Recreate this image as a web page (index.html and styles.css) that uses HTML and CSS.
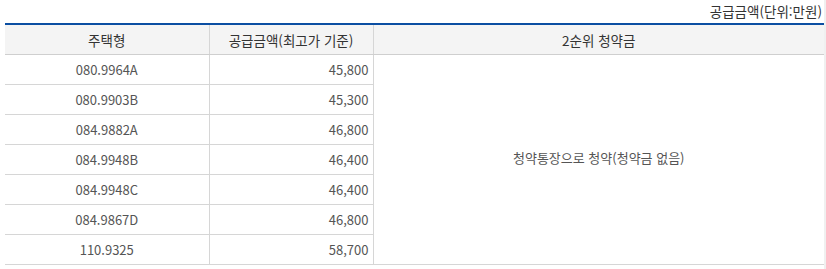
FILE: index.html
```html
<!DOCTYPE html>
<html lang="ko">
<head>
<meta charset="utf-8">
<link rel="stylesheet" href="styles.css">
</head>
<body>
<div class="page">
  <div class="content">
    <p class="unit">공급금액(단위:만원)</p>
    <table class="price">
      <colgroup>
        <col class="c1"><col class="c2"><col class="c3">
      </colgroup>
      <thead>
        <tr><th>주택형</th><th>공급금액(최고가 기준)</th><th>2순위 청약금</th></tr>
      </thead>
      <tbody>
        <tr><td>080.9964A</td><td class="num">45,800</td><td class="merged" rowspan="7">청약통장으로 청약(청약금 없음)</td></tr>
        <tr><td>080.9903B</td><td class="num">45,300</td></tr>
        <tr><td>084.9882A</td><td class="num">46,800</td></tr>
        <tr><td>084.9948B</td><td class="num">46,400</td></tr>
        <tr><td>084.9948C</td><td class="num">46,400</td></tr>
        <tr><td>084.9867D</td><td class="num">46,800</td></tr>
        <tr><td>110.9325</td><td class="num">58,700</td></tr>
      </tbody>
    </table>
  </div>
  <div class="strip"></div>
</div>
</body>
</html>
```
FILE: styles.css
```css
html, body {
  margin: 0;
  padding: 0;
  background: #fff;
}
body {
  font-family: "Noto Sans CJK KR", "Noto Sans", sans-serif;
  font-size: 13px;
  color: #555;
}
.page {
  display: flex;
  height: 269px;
}
.content {
  width: 819px;
  padding-left: 5px;
}
.strip {
  width: 2px;
  background: #f0f0f0;
}
.unit {
  margin: 0;
  padding: 2px 2px 0 0;
  height: 21px;
  line-height: 18px;
  text-align: right;
  color: #333;
  font-size: 13.5px;
}
.price {
  width: 819px;
  border-collapse: collapse;
  table-layout: fixed;
  border-top: 2px solid #0b4ea2;
}
.c1 { width: 204px; }
.c2 { width: 164px; }
.c3 { width: 451px; }
.price th {
  height: 29px;
  padding: 0;
  background: #f4f4f4;
  color: #333;
  font-weight: normal;
  font-size: 13.5px;
  border-bottom: 1px solid #cfcfcf;
  border-left: 1px solid #d6d6d6;
  text-align: center;
}
.price td {
  height: 29px;
  padding: 0 4px;
  text-align: center;
  border-bottom: 1px solid #d6d6d6;
  border-left: 1px solid #d6d6d6;
}
.price th:first-child, .price td:first-child {
  border-left: none;
}
.price td.num {
  text-align: right;
}
.price td.merged {
  vertical-align: top;
  padding-top: 93px;
}
```
